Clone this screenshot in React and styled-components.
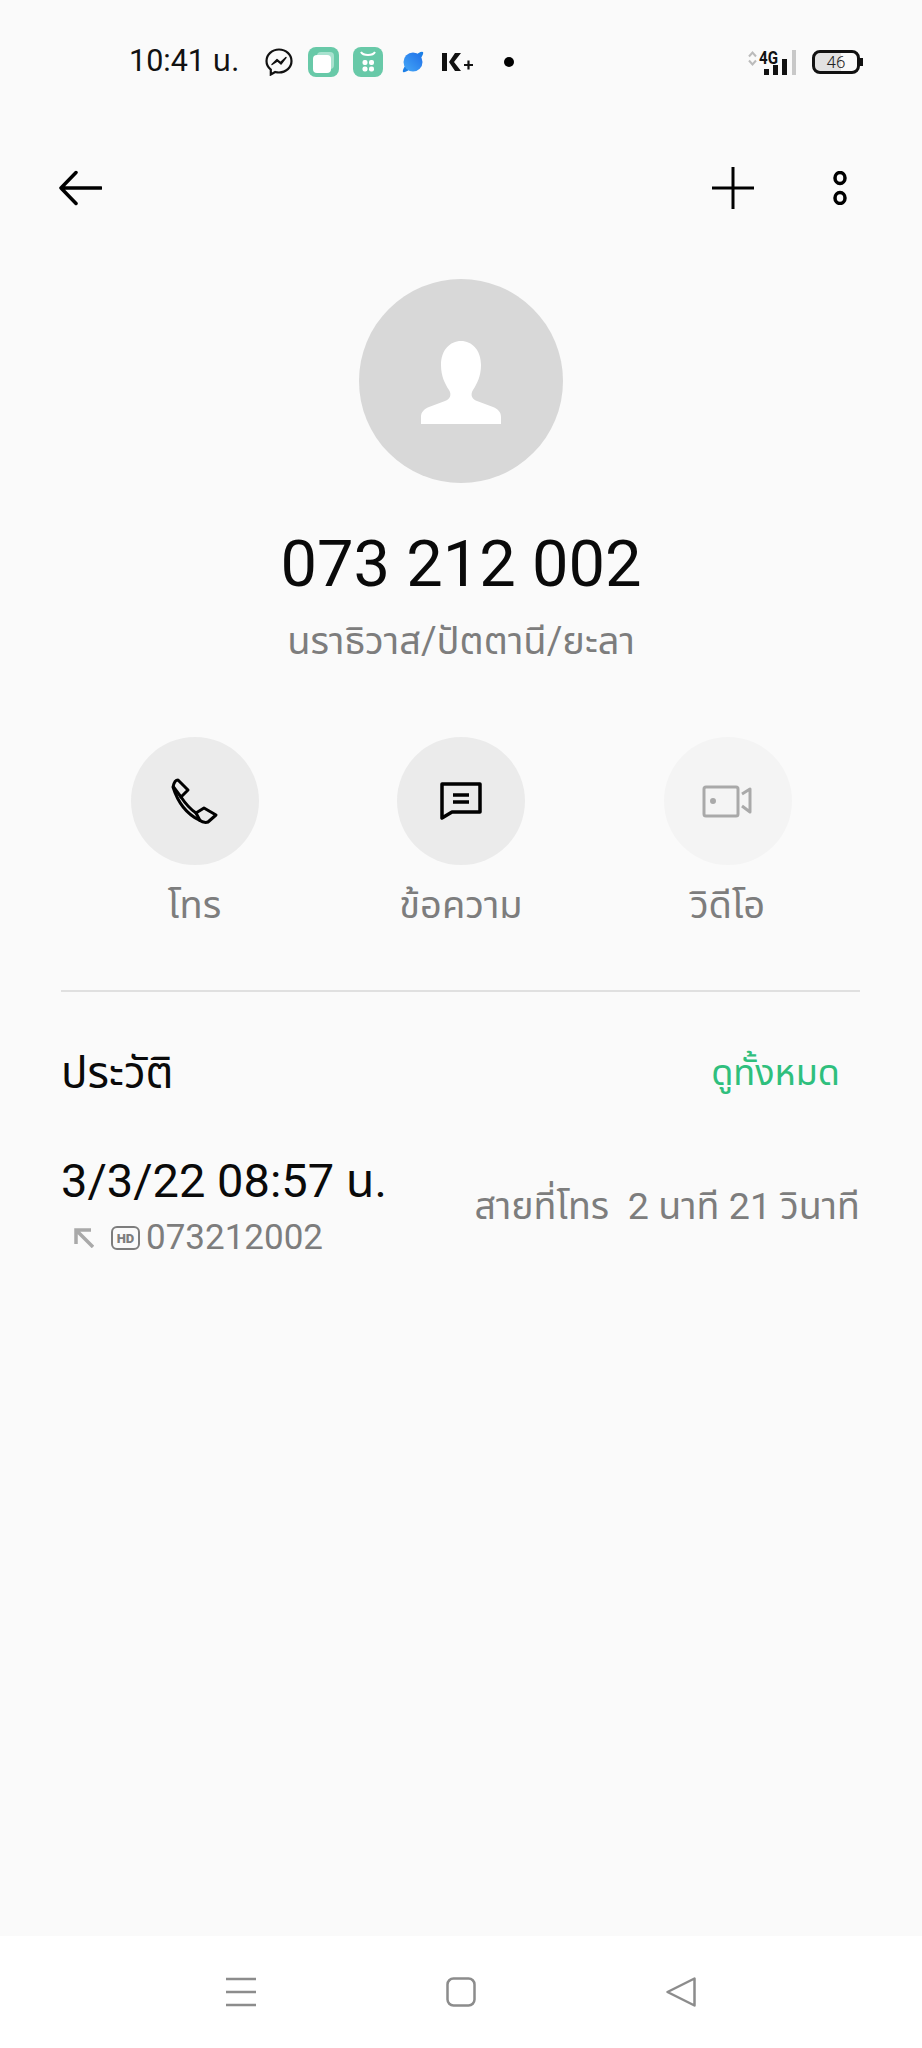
import React from 'react';
import styled, { createGlobalStyle } from 'styled-components';

const GlobalStyle = createGlobalStyle`
  html, body {
    margin: 0;
    padding: 0;
    background: #fafafa;
  }
  * {
    box-sizing: border-box;
  }
`;

const Page = styled.div`
  width: 922px;
  height: 2048px;
  display: flex;
  flex-direction: column;
  background: #fafafa;
  color: #000;
  font-family: Roboto, "Noto Sans", "Noto Sans Thai", "Noto Sans CJK SC", sans-serif;
  overflow: hidden;
`;

const StatusBar = styled.header`
  height: 124px;
  flex: none;
  display: flex;
  align-items: center;
  justify-content: space-between;
  padding: 0 62px 0 129px;
`;

const StatusGroup = styled.div`
  display: flex;
  align-items: center;
`;

const Clock = styled.span`
  font-size: 30.5px;
  width: 136px;
  white-space: nowrap;
  color: #111;
`;

const AppIcon = styled.svg`
  display: block;
  margin-right: ${({ $gap }) => $gap ?? 14}px;
`;

const Dot = styled.span`
  width: 10px;
  height: 10px;
  border-radius: 50%;
  background: #000;
  margin-left: 30px;
`;

const Battery = styled.div`
  position: relative;
  width: 48px;
  height: 24px;
  margin-left: 14px;
  border: 3px solid #111;
  border-radius: 8px;
  display: flex;
  align-items: center;
  justify-content: center;
  font-size: 17px;
  font-weight: 300;
  color: #222;
  background: linear-gradient(90deg, #e2e2e2 62%, #fafafa 62%);

  &::after {
    content: '';
    position: absolute;
    right: -6px;
    top: 5px;
    width: 3px;
    height: 8px;
    background: #111;
  }
`;

const ActionBar = styled.nav`
  height: 80px;
  flex: none;
  margin-top: 24px;
  display: flex;
  align-items: center;
  justify-content: space-between;
  padding: 0 75px 0 58px;
`;

const ActionRight = styled.div`
  display: flex;
  align-items: center;
  gap: 79px;
`;

const Profile = styled.section`
  display: flex;
  flex-direction: column;
  align-items: center;
  padding-top: 51px;
`;

const Avatar = styled.div`
  width: 204px;
  height: 204px;
  border-radius: 50%;
  background: #d8d8d8;
  display: flex;
  align-items: center;
  justify-content: center;
  padding-top: 2px;
`;

const PhoneNumber = styled.h1`
  margin: 43px 0 0;
  font-size: 65px;
  line-height: 76px;
  font-weight: 400;
  color: #0a0a0a;
`;

const Region = styled.p`
  margin: 16px 0 0;
  font-size: 38px;
  line-height: 46px;
  color: #7d7d7d;
`;

const Actions = styled.div`
  display: grid;
  grid-template-columns: repeat(3, 266.5px);
  justify-content: center;
  margin-top: 73px;
`;

const ActionItem = styled.div`
  display: flex;
  flex-direction: column;
  align-items: center;
`;

const ActionCircle = styled.div`
  width: 128px;
  height: 128px;
  border-radius: 50%;
  background: ${({ $muted }) => ($muted ? '#f4f4f4' : '#ebebeb')};
  display: flex;
  align-items: center;
  justify-content: center;
`;

const ActionLabel = styled.span`
  margin-top: 17px;
  font-size: 38px;
  line-height: 46px;
  color: #7d7d7d;
`;

const Divider = styled.hr`
  margin: 62px 62px 0 61px;
  border: 0;
  height: 2px;
  background: #e0e0e0;
`;

const HistoryHeader = styled.div`
  display: flex;
  align-items: center;
  justify-content: space-between;
  padding: 58px 82px 0 61px;
`;

const HistoryTitle = styled.h2`
  margin: 0;
  font-size: 44px;
  line-height: 46px;
  font-weight: 400;
  color: #0a0a0a;
`;

const SeeAll = styled.a`
  font-size: 36px;
  line-height: 46px;
  color: #2fbf7d;
`;

const CallRow = styled.div`
  display: flex;
  align-items: center;
  justify-content: space-between;
  padding: 58px 62px 0 61px;
`;

const CallInfo = styled.div`
  display: flex;
  flex-direction: column;
`;

const CallTime = styled.span`
  font-size: 47px;
  line-height: 54px;
  color: #0a0a0a;
`;

const CallMeta = styled.div`
  display: flex;
  align-items: center;
  margin-top: 7px;
  padding-left: 13px;
  font-size: 35px;
  line-height: 46px;
  color: #7d7d7d;
`;

const DirectionIcon = styled.svg`
  margin-right: 17px;
`;

const HdIcon = styled.svg`
  margin-right: 6px;
`;

const CallDuration = styled.span`
  font-size: 37.6px;
  color: #7d7d7d;
  white-space: pre;
`;

const Spacer = styled.div`
  flex: 1;
`;

const BottomNav = styled.footer`
  height: 112px;
  flex: none;
  background: #fff;
  display: flex;
  align-items: center;
  justify-content: center;
  gap: 190px;
`;

const Stroke = { fill: 'none', stroke: '#000', strokeLinecap: 'round', strokeLinejoin: 'round' };

export default function App() {
  return (
    <Page>
      <GlobalStyle />
      <StatusBar>
        <StatusGroup>
          <Clock>10:41 น.</Clock>
          <AppIcon width="28" height="28" viewBox="0 0 28 28" $gap={15}>
            <path d="M14 1.500C7 1.500 1.500 6.600 1.500 13c0 3.500 1.600 6.500 4.300 8.600V26.500l4.400-2.500c1.200.3 2.500.5 3.800.5 7 0 12.500-5.100 12.500-11.500S21 1.500 14 1.500z" fill="none" stroke="#111" strokeWidth="2.200" />
            <path d="M7 16.500l5-5 3.500 3 5.500-5-5 6.500-3.500-3z" fill="#111" stroke="#111" strokeWidth="1.400" strokeLinejoin="round" />
          </AppIcon>
          <AppIcon width="31" height="30" viewBox="0 0 31 30">
            <rect width="31" height="30" rx="8" fill="#68c9a8" />
            <rect x="9" y="5" width="17" height="17" rx="4" fill="#a8e2cf" />
            <rect x="5" y="8" width="18" height="18" rx="4" fill="#fff" />
          </AppIcon>
          <AppIcon width="30" height="30" viewBox="0 0 30 30" $gap={19}>
            <rect width="30" height="30" rx="8" fill="#68c9a8" />
            <path d="M8 5c2 4 12 4 14 0" fill="none" stroke="#fff" strokeWidth="2" />
            <rect x="9.500" y="13" width="5" height="5" rx="2" fill="#fff" />
            <rect x="16" y="13" width="5" height="5" rx="2" fill="#fff" />
            <rect x="9.500" y="19.500" width="5" height="5" rx="2" fill="#fff" />
            <rect x="16" y="19.500" width="5" height="5" rx="2" fill="#fff" />
          </AppIcon>
          <AppIcon width="22" height="22" viewBox="0 0 22 22" $gap={18}>
            <defs>
              <linearGradient id="planet" x1="0" y1="1" x2="1" y2="0">
                <stop offset="0" stopColor="#45a8f7" />
                <stop offset="1" stopColor="#1f6fe8" />
              </linearGradient>
            </defs>
            <ellipse cx="11" cy="11" rx="14" ry="3.500" fill="#1c7fe6" transform="rotate(-45 11 11)" />
            <circle cx="11" cy="11" r="9.500" fill="url(#planet)" />
          </AppIcon>
          <AppIcon width="32" height="20" viewBox="0 0 32 20" $gap={0}>
            <path d="M0 1h5v18H0zM7 10l6-9h6l-7 9 7 9h-6z" fill="#111" />
            <path d="M22 13h9M26.500 8.500v9" stroke="#111" strokeWidth="2.200" />
          </AppIcon>
          <Dot />
        </StatusGroup>
        <StatusGroup>
          <svg width="50" height="28" viewBox="0 0 50 28">
            <path d="M1 8.500l3.500-4 3.500 4M1 12.500l3.500 4 3.500-4" fill="none" stroke="#bbb" strokeWidth="2" />
            <rect x="16" y="21" width="5" height="6" fill="#111" />
            <rect x="25" y="17" width="5" height="10" fill="#111" />
            <rect x="34" y="11" width="5" height="16" fill="#111" />
            <rect x="44" y="2" width="4" height="25" fill="#c8c8c8" />
            <text x="11" y="16" fontSize="18" fontWeight="700" fontFamily="Roboto, sans-serif" fill="#111" textLength="19" lengthAdjust="spacingAndGlyphs">4G</text>
          </svg>
          <Battery>46</Battery>
        </StatusGroup>
      </StatusBar>

      <ActionBar>
        <svg width="44" height="36" viewBox="0 0 44 36" {...Stroke} strokeWidth="3.500">
          <path d="M3 18h40M18 2.500L3 18l15 15.500" />
        </svg>
        <ActionRight>
          <svg width="42" height="42" viewBox="0 0 42 42" {...Stroke} strokeWidth="3" strokeLinecap="butt">
            <path d="M0 21h42M21 0v42" />
          </svg>
          <svg width="14" height="34" viewBox="0 0 14 34" {...Stroke} strokeWidth="3.500">
            <ellipse cx="7" cy="7" rx="5" ry="5.500" />
            <ellipse cx="7" cy="27" rx="5" ry="5.500" />
          </svg>
        </ActionRight>
      </ActionBar>

      <Profile>
        <Avatar>
          <svg width="80" height="83" viewBox="0 0 80 83">
            <path d="M40 0c11 0 20 9 20 24 0 11-4 19-8 25-3 5-1 9 4 11l16 6c5 2 8 5 8 10v7H0v-7c0-5 3-8 8-10l16-6c5-2 7-6 4-11-4-6-8-14-8-25C20 9 29 0 40 0z" fill="#fff" />
          </svg>
        </Avatar>
        <PhoneNumber>073 212 002</PhoneNumber>
        <Region>นราธิวาส/ปัตตานี/ยะลา</Region>
        <Actions>
          <ActionItem>
            <ActionCircle>
              <svg width="50" height="48" viewBox="9 7 50 48" {...Stroke} strokeWidth="3">
                <path d="M12 17C17 33 26 44 38 50c3 2 6 3 9 2l8-7-12-7-8 5C29 39 24 33 20 27l7-7-10-10c-2 0-4 2-5 7z" />
                <path d="M12.500 17L20 27M35 43l4 7.500" />
              </svg>
            </ActionCircle>
            <ActionLabel>โทร</ActionLabel>
          </ActionItem>
          <ActionItem>
            <ActionCircle>
              <svg width="42" height="38" viewBox="0 0 42 38" fill="none" stroke="#000" strokeWidth="3.500">
                <path d="M2 2h38v28H12L2 36z" strokeLinejoin="round" />
                <path d="M13 13h16M13 20h16" />
              </svg>
            </ActionCircle>
            <ActionLabel>ข้อความ</ActionLabel>
          </ActionItem>
          <ActionItem>
            <ActionCircle $muted>
              <svg width="51" height="34" viewBox="7 10 51 34" fill="none" stroke="#a9a9a9" strokeWidth="3" strokeLinejoin="round">
                <rect x="9" y="13" width="34" height="29" rx="2" />
                <circle cx="18" cy="27" r="1.500" fill="#a9a9a9" />
                <path d="M47 20l8-5v23l-8-6" />
              </svg>
            </ActionCircle>
            <ActionLabel>วิดีโอ</ActionLabel>
          </ActionItem>
        </Actions>
      </Profile>

      <Divider />

      <HistoryHeader>
        <HistoryTitle>ประวัติ</HistoryTitle>
        <SeeAll>ดูทั้งหมด</SeeAll>
      </HistoryHeader>

      <CallRow>
        <CallInfo>
          <CallTime>3/3/22 08:57 น.</CallTime>
          <CallMeta>
            <DirectionIcon width="20" height="20" viewBox="0 0 20 20" fill="none" stroke="#a9a9a9" strokeWidth="3.500">
              <path d="M2 16V2h15M2 2l17 17" />
            </DirectionIcon>
            <HdIcon width="29" height="24" viewBox="0 0 29 24">
              <rect x="1" y="1" width="27" height="22" rx="5" fill="none" stroke="#7d7d7d" strokeWidth="2" />
              <text x="14.500" y="17" textAnchor="middle" fontSize="13" fontWeight="900" fontFamily="Roboto, sans-serif" fill="#7d7d7d">HD</text>
            </HdIcon>
            073212002
          </CallMeta>
        </CallInfo>
        <CallDuration>สายที่โทร  2 นาที 21 วินาที</CallDuration>
      </CallRow>

      <Spacer />

      <BottomNav>
        <svg width="30" height="30" viewBox="0 0 30 30" stroke="#8c8c8c" strokeWidth="2.500">
          <path d="M0 2h30M0 15h30M0 28h30" />
        </svg>
        <svg width="30" height="30" viewBox="0 0 30 30" fill="none" stroke="#8c8c8c" strokeWidth="2.500">
          <rect x="1.500" y="1.500" width="27" height="27" rx="6" />
        </svg>
        <svg width="30" height="30" viewBox="0 0 30 30" fill="none" stroke="#8c8c8c" strokeWidth="2.500" strokeLinejoin="round">
          <path d="M28.500 1.500v27L1.500 15z" />
        </svg>
      </BottomNav>
    </Page>
  );
}
